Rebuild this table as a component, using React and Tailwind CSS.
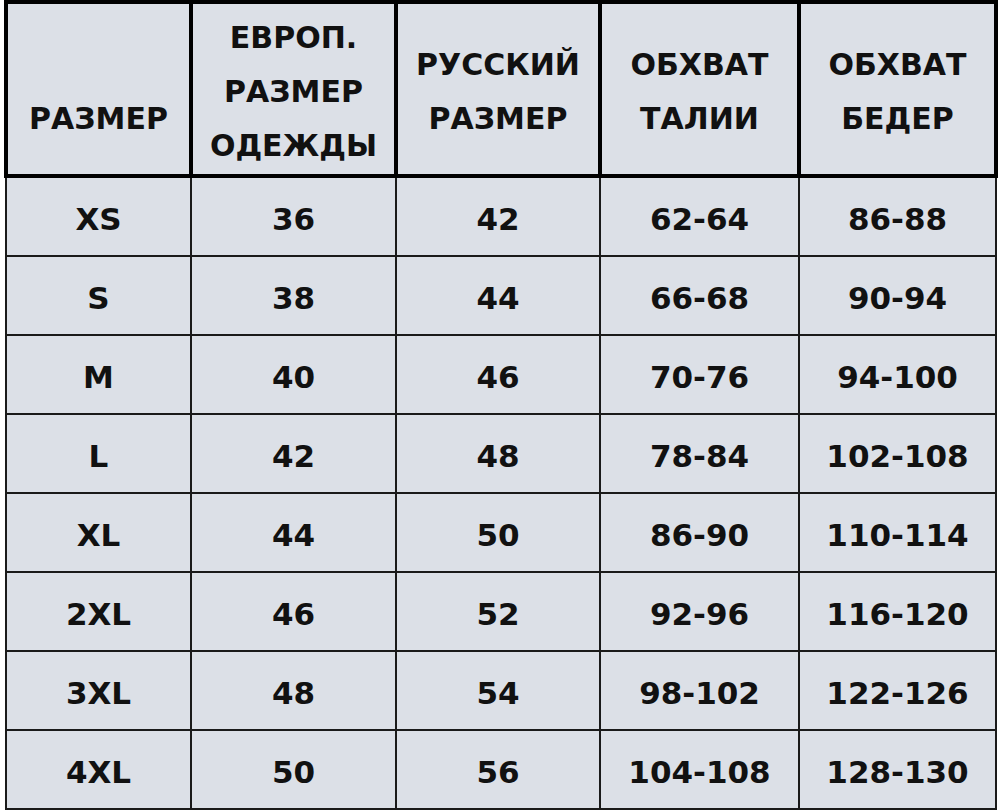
const headers = [
  ["\u00a0", "РАЗМЕР"],
  ["ЕВРОП.", "РАЗМЕР", "ОДЕЖДЫ"],
  ["РУССКИЙ", "РАЗМЕР"],
  ["ОБХВАТ", "ТАЛИИ"],
  ["ОБХВАТ", "БЕДЕР"],
];

const rows = [
  ["XS", "36", "42", "62-64", "86-88"],
  ["S", "38", "44", "66-68", "90-94"],
  ["M", "40", "46", "70-76", "94-100"],
  ["L", "42", "48", "78-84", "102-108"],
  ["XL", "44", "50", "86-90", "110-114"],
  ["2XL", "46", "52", "92-96", "116-120"],
  ["3XL", "48", "54", "98-102", "122-126"],
  ["4XL", "50", "56", "104-108", "128-130"],
];

export default function App() {
  return (
    <div
      className="w-[1000px] h-[811px] bg-white overflow-hidden text-[#111] font-bold"
      style={{ fontFamily: '"DejaVu Sans", "Liberation Sans", sans-serif' }}
    >
      {/* шапка таблицы */}
      <div className="ml-[4px] w-[994px] h-[178px] border-4 border-black bg-[#dce0e7] grid grid-cols-[185px_205px_204px_199px_193px]">
        {headers.map((lines, i) => (
          <div
            key={i}
            className={`flex flex-col items-center justify-center pt-[6px] text-[30px] leading-[54px] ${i < 4 ? "border-r-4 border-black" : ""}`}
          >
            {lines.map((l, li) => (
              <span key={li}>{l}</span>
            ))}
          </div>
        ))}
      </div>

      {/* строки */}
      <div className="ml-[5px] w-[992px] border-l-2 border-[#1a1a1a]">
        {rows.map((r, ri) => (
          <div
            key={ri}
            className="grid grid-cols-[185px_205px_204px_199px_197px] h-[79px] border-b-2 border-[#1a1a1a] bg-[#dce0e7]"
          >
            {r.map((c, ci) => (
              <div
                key={ci}
                className="flex items-center justify-center pt-[5px] text-[31px] border-r-2 border-[#1a1a1a]"
              >
                {c}
              </div>
            ))}
          </div>
        ))}
      </div>
    </div>
  );
}
